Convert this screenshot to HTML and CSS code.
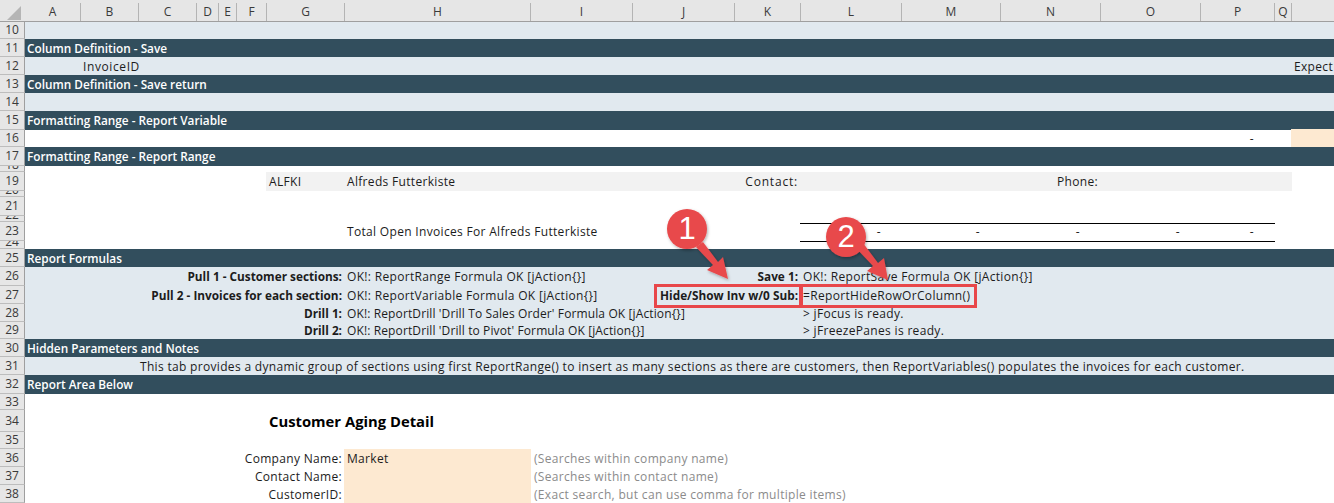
FILE: index.html
```html
<!DOCTYPE html>
<html lang="en">
<head>
<meta charset="utf-8">
<title>Customer Aging Detail</title>
<link rel="stylesheet" href="styles.css">
</head>
<body>
<div class="sheet">
  <div class="row colhead">
    <div class="corner"><svg class="tri" width="14" height="14" viewBox="0 0 14 14"><path d="M14 0V14H0Z" fill="#b5b5b5"/></svg></div>
    <div class="ch first">A</div><div class="ch">B</div><div class="ch">C</div><div class="ch">D</div><div class="ch">E</div><div class="ch">F</div><div class="ch">G</div><div class="ch">H</div><div class="ch">I</div><div class="ch">J</div><div class="ch">K</div><div class="ch">L</div><div class="ch">M</div><div class="ch">N</div><div class="ch">O</div><div class="ch">P</div><div class="ch">Q</div><div class="ch"></div>
  </div>
  <div class="row h17 pale"><div class="rh">10</div></div>
  <div class="row h18 dark"><div class="rh">11</div><div class="sec">Column Definition - Save</div></div>
  <div class="row h18 pale"><div class="rh">12</div><div class="c-b">InvoiceID</div><div class="c-r">Expect</div></div>
  <div class="row h18 dark"><div class="rh">13</div><div class="sec">Column Definition - Save return</div></div>
  <div class="row h18 pale"><div class="rh">14</div></div>
  <div class="row h19 dark"><div class="rh">15</div><div class="sec">Formatting Range - Report Variable</div></div>
  <div class="row h17"><div class="rh">16</div><div class="c-p dash">-</div><div class="c-r input"></div></div>
  <div class="row h19 dark"><div class="rh">17</div><div class="sec">Formatting Range - Report Range</div></div>
  <div class="row h6"><div class="rh">18</div></div>
  <div class="row h19"><div class="rh">19</div><div class="band"></div><div class="c-g">ALFKI</div><div class="c-h">Alfreds Futterkiste</div><div class="c-k right">Contact:</div><div class="c-n right">Phone:</div></div>
  <div class="row h6"><div class="rh">20</div></div>
  <div class="row h19"><div class="rh">21</div></div>
  <div class="row h6"><div class="rh">22</div></div>
  <div class="row h19"><div class="rh">23</div><div class="c-h">Total Open Invoices For Alfreds Futterkiste</div><div class="rules"></div><div class="c-l dash">-</div><div class="c-m dash">-</div><div class="c-n dash">-</div><div class="c-o dash">-</div><div class="c-p dash">-</div></div>
  <div class="row h8"><div class="rh">24</div></div>
  <div class="row h18 dark"><div class="rh">25</div><div class="sec">Report Formulas</div></div>
  <div class="row h19 pale"><div class="rh">26</div><div class="label strong">Pull 1 - Customer sections:</div><div class="c-hi">OK!: ReportRange Formula OK [jAction{}]</div><div class="c-jk right strong">Save 1:</div><div class="c-lo">OK!: ReportSave Formula OK [jAction{}]</div></div>
  <div class="row h18 pale"><div class="rh">27</div><div class="label strong">Pull 2 - Invoices for each section:</div><div class="c-hi">OK!: ReportVariable Formula OK [jAction{}]</div><div class="c-jk right strong">Hide/Show Inv w/0 Sub:</div><div class="c-lo">=ReportHideRowOrColumn()</div></div>
  <div class="row h18 pale"><div class="rh">28</div><div class="label strong">Drill 1:</div><div class="c-hi tight">OK!: ReportDrill 'Drill To Sales Order' Formula OK [jAction{}]</div><div class="c-lo">&gt; jFocus is ready.</div></div>
  <div class="row h17 pale"><div class="rh">29</div><div class="label strong">Drill 2:</div><div class="c-hi tight">OK!: ReportDrill 'Drill to Pivot' Formula OK [jAction{}]</div><div class="c-lo">&gt; jFreezePanes is ready.</div></div>
  <div class="row h18 dark"><div class="rh">30</div><div class="sec">Hidden Parameters and Notes</div></div>
  <div class="row h18 pale"><div class="rh">31</div><div class="c-note">This tab provides a dynamic group of sections using first ReportRange() to insert as many sections as there are customers, then ReportVariables() populates the invoices for each customer.</div></div>
  <div class="row h19 dark"><div class="rh">32</div><div class="sec">Report Area Below</div></div>
  <div class="row h16"><div class="rh">33</div></div>
  <div class="row h22"><div class="rh">34</div><div class="title">Customer Aging Detail</div></div>
  <div class="row h17"><div class="rh">35</div></div>
  <div class="row h18"><div class="rh">36</div><div class="label">Company Name:</div><div class="c-h input">Market</div><div class="hint">(Searches within company name)</div></div>
  <div class="row h18"><div class="rh">37</div><div class="label">Contact Name:</div><div class="c-h input"></div><div class="hint">(Searches within contact name)</div></div>
  <div class="row h18"><div class="rh">38</div><div class="label">CustomerID:</div><div class="c-h input"></div><div class="hint">(Exact search, but can use comma for multiple items)</div></div>

  <svg class="marks" width="1334" height="503" viewBox="0 0 1334 503">
    <defs>
      <filter id="soft" x="-30%" y="-30%" width="160%" height="160%"><feDropShadow dx="1" dy="1.5" stdDeviation="1.5" flood-color="#000" flood-opacity=".3"/></filter>
    </defs>
    <rect class="box" x="655.5" y="285.5" width="145" height="21"/>
    <rect class="box" x="801.5" y="285.5" width="174" height="21"/>
    <g filter="url(#soft)">
      <path class="red" d="M696 247 703 242 718 262 723 257 728 279 707 270 713 265Z"/>
      <circle class="red" cx="687" cy="229" r="20"/>
      <path class="red" d="M856 248 863 243 878 263 884 258 888 280 867 271 873 266Z"/>
      <circle class="red" cx="846" cy="237" r="20"/>
    </g>
    <text class="num" x="687" y="239">1</text>
    <text class="num" x="846" y="247">2</text>
  </svg>
</div>
</body>
</html>
```
FILE: styles.css
```css
* { box-sizing: border-box; }
html, body { margin: 0; padding: 0; background: #fff; overflow: hidden; }
body { font-family: "Open Sans", "Liberation Sans", sans-serif; font-size: 12px; letter-spacing: .32px; color: #1c1c1c; }
.sheet { position: relative; width: 1334px; height: 503px; overflow: hidden; }
.row {
  display: grid;
  grid-template-columns: 25px 55px 58px 58px 22px 18px 30px 78px 186px 102px 102px 66px 101px 99px 100px 100px 74px 17px 43px;
  grid-template-rows: 1fr;
  white-space: nowrap;
  line-height: 1;
  align-items: stretch;
}
.row > div { grid-row: 1; display: flex; align-items: center; min-width: 0; }
.h6 { height: 6px; } .h8 { height: 8px; } .h16 { height: 16px; } .h17 { height: 17px; }
.h18 { height: 18px; } .h19 { height: 19px; } .h22 { height: 22px; }
.h6 > .rh, .h8 > .rh { align-items: flex-end; }

.colhead { height: 22px; background: #e6e6e6; border-bottom: 1px solid #9f9f9f; }
.corner { justify-content: flex-end; padding-right: 4px; padding-top: 4px; }
.tri { display: block; }
.ch { justify-content: center; font-size: 12px; letter-spacing: 0; color: #3a3a3a; border-left: 1px solid #b4b4b4; margin-top: 3px; }
.ch.first { border-left: 0; }

.rh {
  grid-column: 1; justify-content: center; overflow: hidden;
  background: #e6e6e6; color: #3a3a3a; font-size: 12px; letter-spacing: 0;
  border-right: 1px solid #9f9f9f; border-bottom: 1px solid #bdbdbd;
}
.pale { background: #e1e9ef; }
.dark { background: #324e5d; color: #fff; }
.sec { grid-column: 2 / -1; padding-left: 2px; padding-top: 1px; font-size: 11.8px; font-weight: 600; letter-spacing: 0; }

.c-b { grid-column: 3; padding-left: 3px; padding-top: 1px; letter-spacing: .6px; }
.c-g { grid-column: 8; padding-left: 3px; padding-top: 1px; }
.c-h { grid-column: 9; padding-left: 3px; padding-top: 1px; }
.c-hi { grid-column: 9 / 12; padding-left: 3px; padding-top: 1px; }
.tight { letter-spacing: .12px; }
.c-jk { grid-column: 11 / 13; }
.c-k { grid-column: 12; letter-spacing: .8px; }
.c-l { grid-column: 13; }
.c-m { grid-column: 14; }
.c-n { grid-column: 15; }
.c-o { grid-column: 16; }
.c-p { grid-column: 17; }
.c-r { grid-column: 19; padding-left: 3px; padding-top: 1px; }
.c-lo { grid-column: 13 / 18; padding-left: 3px; padding-top: 1px; }
.c-note { grid-column: 4 / -1; padding-left: 2px; padding-top: 1px; }

.right { justify-content: flex-end; padding-right: 2px; padding-top: 1px; }
.strong { font-size: 11.8px; font-weight: 700; letter-spacing: 0; }
.dash { justify-content: flex-end; padding-right: 20px; }
.band { grid-column: 8 / 19; background: #f2f2f2; box-shadow: 1px 0 0 #f2f2f2; }
.rules { grid-column: 13 / 18; margin: 1px -1px -1px 0; border-top: 1px solid #000; border-bottom: 1px solid #000; }
.label { grid-column: 2 / 9; justify-content: flex-end; padding-right: 2px; padding-top: 1px; }
.title { grid-column: 8 / 12; padding-left: 3px; font-size: 14.8px; font-weight: 700; letter-spacing: 0; color: #000; }
.input { background: #fde9d1; box-shadow: 1px 0 0 #fde9d1; }
.c-r.input { box-shadow: 0 -1px 0 #fde9d1; }
.hint { grid-column: 10 / 15; padding-left: 4px; padding-top: 1px; color: #8b8b8b; }

.marks { position: absolute; left: 0; top: 0; pointer-events: none; }
.box { fill: none; stroke: #e8474a; stroke-width: 3; }
.red { fill: #e8494b; }
.num { fill: #fff; font-family: "Liberation Sans", sans-serif; font-size: 31px; letter-spacing: 0; text-anchor: middle; }
```
